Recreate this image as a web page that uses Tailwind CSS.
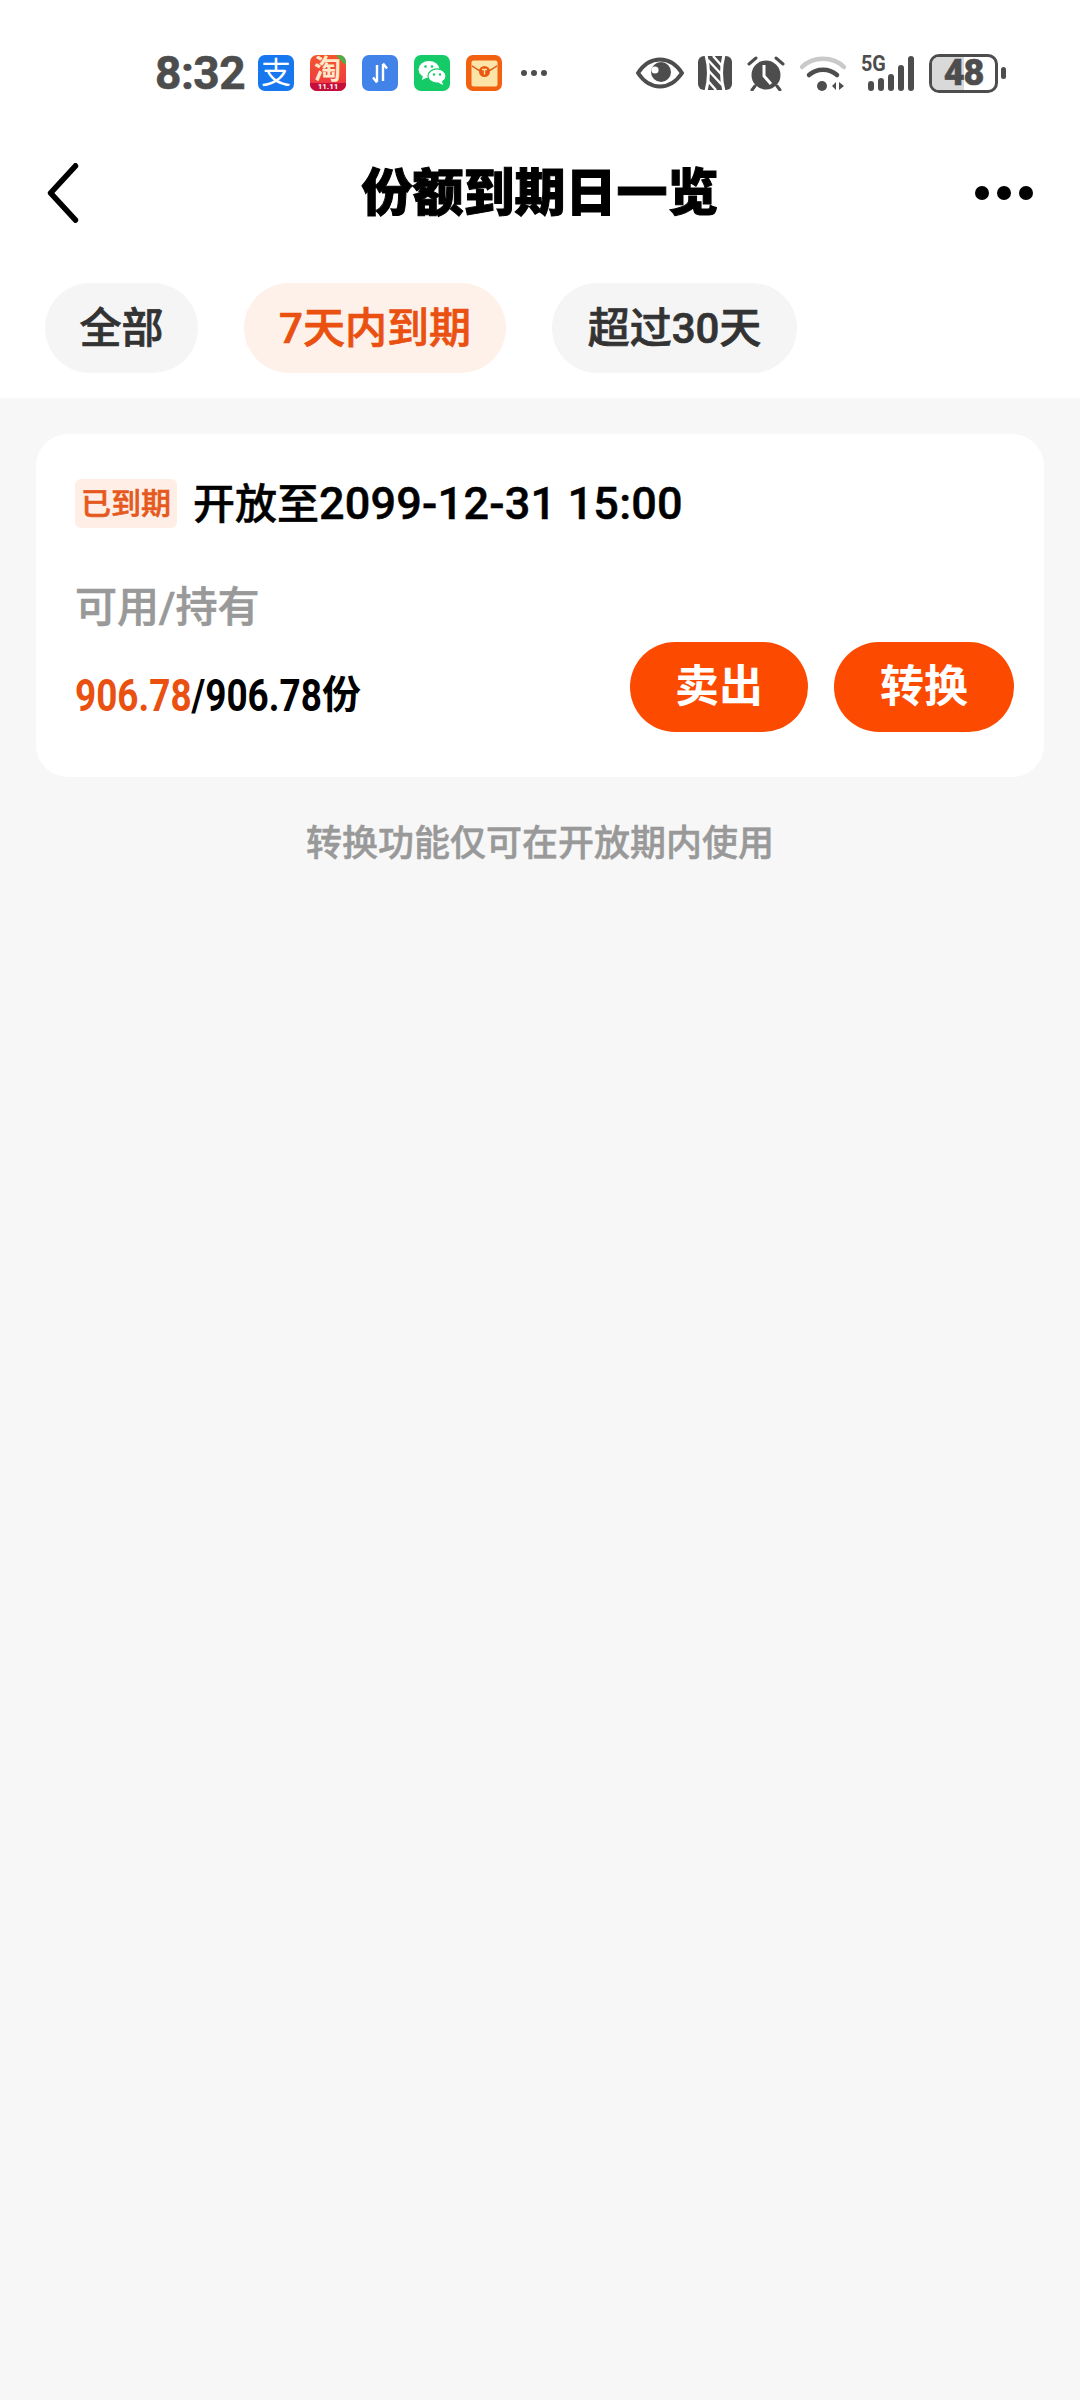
<!DOCTYPE html>
<html lang="zh-CN">
<head>
  <meta charset="UTF-8">
  <meta name="viewport" content="width=device-width, initial-scale=1.0">
  <title>份额到期日一览</title>
  <script src="https://cdn.jsdelivr.net/npm/@tailwindcss/browser@4"></script>
</head>
<body class="bg-[#f7f7f7] font-['Roboto','Noto_Sans_CJK_SC',sans-serif]">
  <div class="w-[1080px] h-[2400px] bg-[#f7f7f7] overflow-hidden">

    <!-- Header block -->
    <div class="bg-white h-[398px]">
      <!-- Status bar -->
      <div class="h-[146px] flex items-center pl-[155px] pr-[74px] text-[#4d4d4d]">
        <span class="w-[90px] text-[46px] font-bold leading-none tracking-[-0.5px] [-webkit-text-stroke:0.6px_#4d4d4d]">8:32</span>
        <div class="flex gap-4 ml-[13px]">
          <!-- alipay -->
          <div class="w-9 h-9 rounded-[7px] bg-[#1677ef] flex items-center justify-center text-white text-[30px] leading-none">支</div>
          <!-- taobao -->
          <div class="w-9 h-9 rounded-[7px] bg-gradient-to-b from-[#f4552a] to-[#ee2f45] relative overflow-hidden text-[#ffe9c9]">
            <span class="absolute -right-[5px] -top-[5px] w-[12px] h-[12px] rotate-45 bg-[#4fae4a]"></span>
            <span class="absolute left-[4px] top-[1px] text-[27px] leading-[28px] font-bold">淘</span>
            <span class="absolute left-0 right-0 bottom-0 h-[8px] bg-[#c40f3a] text-center text-[8px] leading-[8px] font-bold text-white">11.11</span>
          </div>
          <!-- transfer -->
          <div class="w-9 h-9 rounded-[7px] bg-[#4283ea] flex items-center justify-center">
            <svg width="20" height="22" viewBox="0 0 20 22" fill="none" stroke="white" stroke-width="2.4">
              <path d="M7 3v17M3 15.5l4 5"/>
              <path d="M13 19V2M17 6.5l-4-5"/>
            </svg>
          </div>
          <!-- wechat -->
          <div class="w-9 h-9 rounded-[7px] bg-[#14cb68] flex items-center justify-center">
            <svg width="30" height="28" viewBox="0 0 30 28">
              <ellipse cx="12" cy="10.5" rx="10.5" ry="8.5" fill="white"/>
              <path d="M6 16l-1 5 6-3z" fill="white"/>
              <ellipse cx="20" cy="17" rx="9" ry="7.2" fill="white" stroke="#14cb68" stroke-width="1.2"/>
              <path d="M25 22l1 4-5-2.5z" fill="white"/>
              <circle cx="8.5" cy="7.5" r="1.3" fill="#14cb68"/>
              <circle cx="15" cy="7.5" r="1.3" fill="#14cb68"/>
              <circle cx="17" cy="15.5" r="1.2" fill="#14cb68"/>
              <circle cx="23" cy="15.5" r="1.2" fill="#14cb68"/>
            </svg>
          </div>
          <!-- red packet -->
          <div class="w-9 h-9 rounded-[7px] bg-[#f1610f] flex items-center justify-center">
            <svg width="27" height="27" viewBox="0 0 27 27">
              <rect x="0.5" y="0.5" width="26" height="26" rx="2" fill="#fce3a8"/>
              <path d="M1 6c4 2 8 6 12.5 6S22 8 26 6" fill="none" stroke="#d9601c" stroke-width="1.4"/>
              <circle cx="13.5" cy="11.5" r="5.5" fill="#e8590f"/>
              <path d="M11 9.5h5M13.5 9.5v5" stroke="#fce3a8" stroke-width="1.4"/>
            </svg>
          </div>
        </div>
        <div class="flex gap-[4px] ml-[19px]">
          <span class="w-[6px] h-[6px] rounded-full bg-[#4d4d4d]"></span>
          <span class="w-[6px] h-[6px] rounded-full bg-[#4d4d4d]"></span>
          <span class="w-[6px] h-[6px] rounded-full bg-[#4d4d4d]"></span>
        </div>

        <div class="ml-auto flex items-center">
          <!-- eye -->
          <svg width="48" height="32" viewBox="0 0 48 32" fill="none">
            <path d="M2 16C8 7 15 2.5 24 2.5S40 7 46 16c-6 9-13 13.5-22 13.5S8 25 2 16z" stroke="#4d4d4d" stroke-width="4"/>
            <circle cx="25" cy="15" r="10" fill="#4d4d4d"/>
            <circle cx="19" cy="13" r="3.6" fill="white"/>
          </svg>
          <!-- nfc -->
          <svg class="ml-[14px]" width="34" height="34" viewBox="0 0 34 34" fill="none">
            <rect width="34" height="34" rx="6" fill="#4d4d4d"/>
            <path d="M8 -1c3 11 3 25 0 36" stroke="white" stroke-width="3"/>
            <path d="M26 -1c-3 11-3 25 0 36" stroke="white" stroke-width="3"/>
            <path d="M10 4l14 15M10 14l14 15M15 0l9 10M10 25l8 9" stroke="white" stroke-width="2.4"/>
          </svg>
          <!-- alarm -->
          <svg class="ml-[15px]" width="38" height="36" viewBox="0 0 38 36" fill="none">
            <circle cx="19" cy="20" r="14.5" fill="#4d4d4d"/>
            <path d="M2 9l7-6M36 9l-7-6M8 31l-3 4M30 31l3 4" stroke="#4d4d4d" stroke-width="3" stroke-linecap="round"/>
            <path d="M17 10v11l7 8" stroke="white" stroke-width="3"/>
          </svg>
          <!-- wifi -->
          <svg class="ml-[15px]" width="46" height="36" viewBox="0 0 46 36" fill="none">
            <path d="M2 12C13 1 33 1 44 12" stroke="#c9c9c9" stroke-width="4.5" stroke-linecap="round"/>
            <path d="M9 20c8-7 20-7 28 0" stroke="#4d4d4d" stroke-width="4.5" stroke-linecap="round"/>
            <circle cx="22" cy="31" r="5" fill="#4d4d4d"/>
            <path d="M36 27v8l-4-4zM39 27v8l5-4z" fill="#4d4d4d"/>
          </svg>
          <!-- 5G signal -->
          <div class="ml-[15px] w-[53px] h-[36px] relative">
            <span class="absolute left-0 top-0 text-[22px] leading-[17px] font-bold origin-left scale-x-[0.9]">5G</span>
            <div class="absolute left-[7px] right-0 top-0 bottom-0 flex items-end justify-between">
              <span class="w-[6px] h-[10px] rounded-full bg-[#4d4d4d]"></span>
              <span class="w-[6px] h-[13px] rounded-full bg-[#4d4d4d]"></span>
              <span class="w-[6px] h-[17px] rounded-full bg-[#4d4d4d]"></span>
              <span class="w-[6px] h-[26px] rounded-full bg-[#4d4d4d]"></span>
              <span class="w-[6px] h-[35px] rounded-full bg-[#4d4d4d]"></span>
            </div>
          </div>
          <!-- battery -->
          <div class="ml-[15px] relative w-[69px] h-[39px] rounded-[10px] border-[3px] border-[#4d4d4d] overflow-hidden flex items-center justify-center">
            <div class="absolute left-0 top-0 bottom-0 w-[32px] bg-[#d9d9d9]"></div>
            <span class="relative text-[36px] font-black leading-none tracking-[-1px] [-webkit-text-stroke:0.5px_#4d4d4d]">48</span>
          </div>
          <div class="ml-[3px] w-[5px] h-[12px] rounded-full bg-[#4d4d4d]"></div>
        </div>
      </div>

      <!-- Nav bar -->
      <div class="h-[94px] relative flex items-center justify-center">
        <svg class="absolute left-[43px] top-[17px]" width="36" height="60" viewBox="0 0 36 60" fill="none">
          <path d="M32 3L5 30l27 27" transform="translate(3 0) scale(0.92 1)" stroke="black" stroke-width="6" stroke-linecap="round" stroke-linejoin="round"/>
        </svg>
        <h1 class="text-[51px] leading-none font-black text-black [-webkit-text-stroke:1px_black]">份额到期日一览</h1>
        <div class="absolute left-[975px] flex gap-[8px]">
          <span class="w-[14px] h-[14px] rounded-full bg-black"></span>
          <span class="w-[14px] h-[14px] rounded-full bg-black"></span>
          <span class="w-[14px] h-[14px] rounded-full bg-black"></span>
        </div>
      </div>

      <!-- Filter chips -->
      <div class="mt-[43px] ml-[45px] flex gap-[46px] text-[42px] font-medium [-webkit-text-stroke:0.7px_currentColor]">
        <div class="w-[153px] h-[90px] rounded-[45px] bg-[#f5f5f5] text-[#333333] flex items-center justify-center">全部</div>
        <div class="w-[262px] h-[90px] rounded-[45px] bg-[#fdf1ea] text-[#ea5010] flex items-center justify-center">7天内到期</div>
        <div class="w-[245px] h-[90px] rounded-[45px] bg-[#f5f5f5] text-[#333333] flex items-center justify-center">超过30天</div>
      </div>
    </div>

    <!-- Card -->
    <div class="mx-[36px] mt-[36px] h-[343px] rounded-[32px] bg-white pt-[45px] pl-[39px] pr-[30px]">
      <div class="flex items-center h-[49px]">
        <span class="w-[102px] h-[49px] rounded-[6px] bg-[#feeee6] text-[#e5591f] text-[30px] font-medium flex items-center justify-center whitespace-nowrap [-webkit-text-stroke:0.6px_#e5591f]">已到期</span>
        <span class="ml-[16px] text-[42px] font-medium text-black leading-none whitespace-nowrap [-webkit-text-stroke:0.5px_black]">开放至<span class="text-[45px] tracking-[0.2px]">2099-12-31 15:00</span></span>
      </div>
      <div class="mt-[60px] h-[40px] text-[42px] leading-[40px] text-[#999999] font-medium [-webkit-text-stroke:0.6px_#999999]">可用/持有</div>
      <div class="mt-[14px] flex items-center justify-between">
        <div class="flex items-center pt-[16px] text-black font-bold whitespace-nowrap leading-none">
          <span class="w-[247px] text-[45px] origin-left scale-x-[0.82]"><span class="text-[#ea5010]">906.78</span>/906.78</span>
          <span class="text-[39px]">份</span>
        </div>
        <div class="flex gap-[26px]">
          <button class="w-[178px] h-[90px] rounded-[45px] bg-[#fc4a00] text-white text-[44px] font-bold">卖出</button>
          <button class="w-[180px] h-[90px] rounded-[45px] bg-[#fc4a00] text-white text-[44px] font-bold">转换</button>
        </div>
      </div>
    </div>

    <!-- Note -->
    <p class="mt-[43px] h-[48px] text-center text-[36px] leading-[48px] text-[#999999] font-medium [-webkit-text-stroke:0.5px_#999999]">转换功能仅可在开放期内使用</p>
  </div>
</body>
</html>
